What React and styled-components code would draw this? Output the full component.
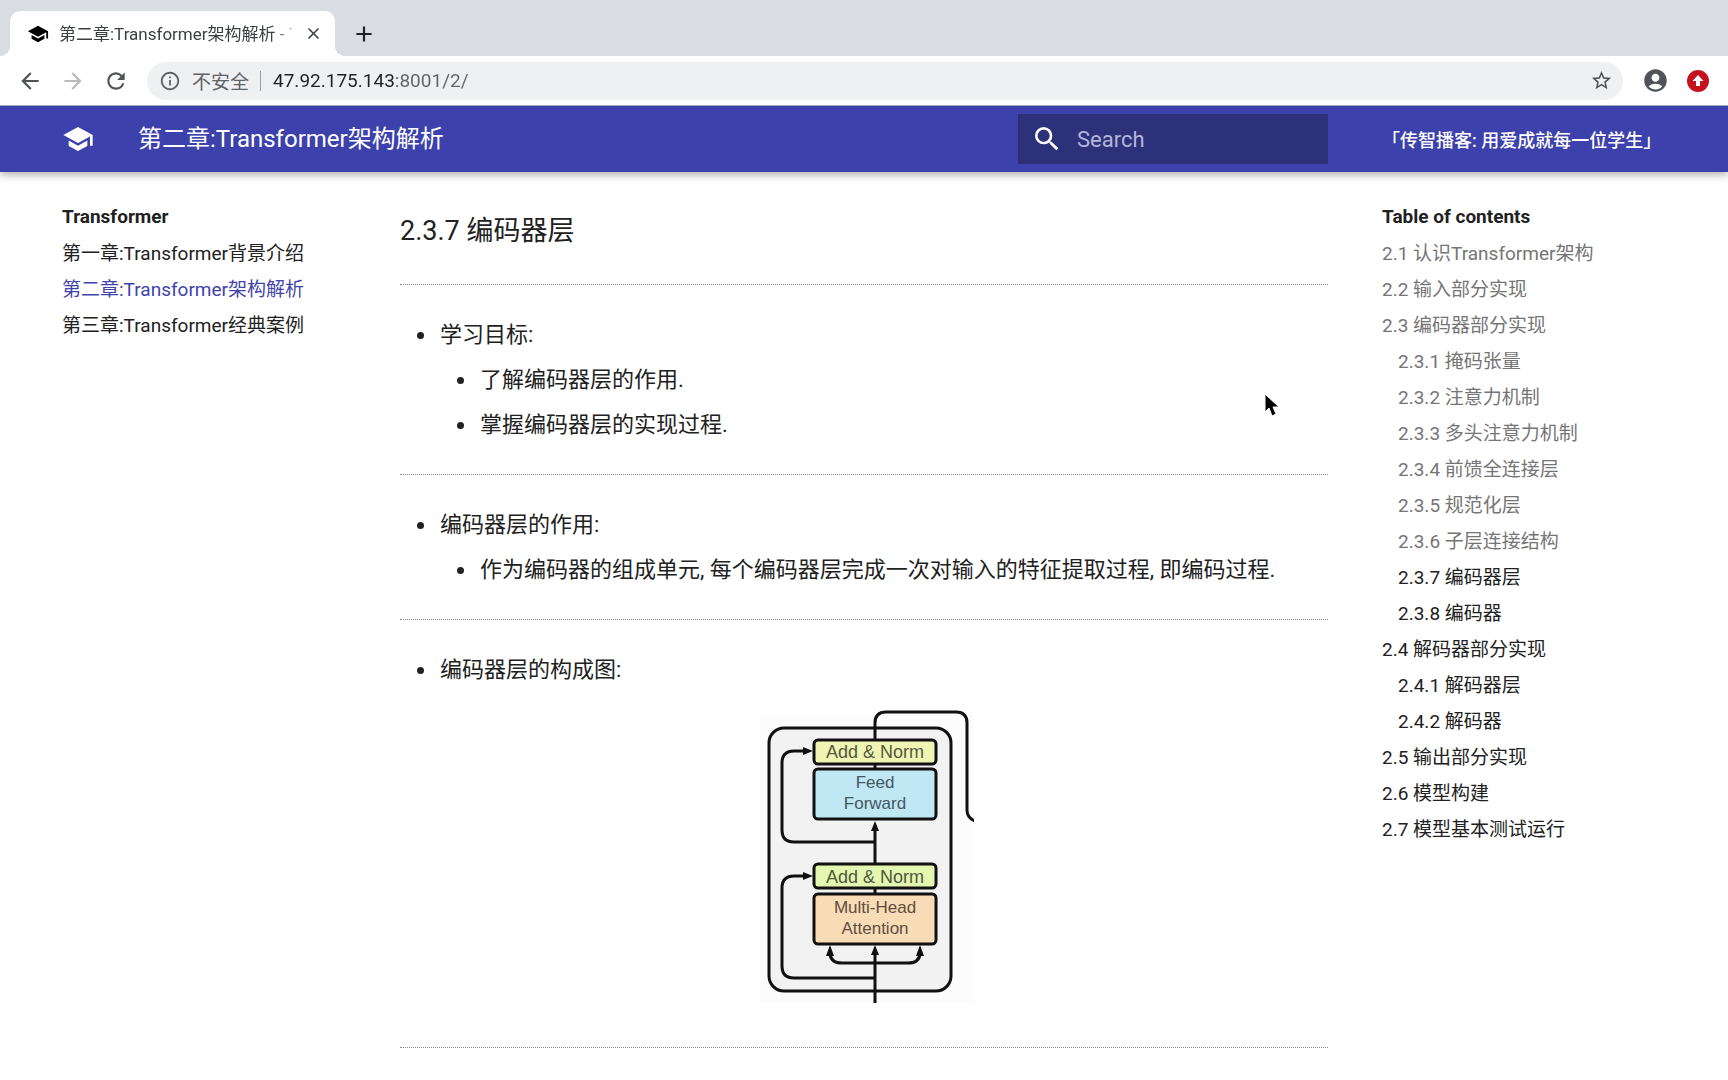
import styled, { createGlobalStyle } from 'styled-components'
import {
  MdSchool,
  MdSearch,
  MdClose,
  MdAdd,
  MdArrowBack,
  MdArrowForward,
  MdRefresh,
  MdInfoOutline,
  MdStarBorder,
  MdAccountCircle,
} from 'react-icons/md'

const chapters = [
  { title: '第一章:Transformer背景介绍', href: '#/1/' },
  { title: '第二章:Transformer架构解析', href: '#/2/', active: true },
  { title: '第三章:Transformer经典案例', href: '#/3/' },
]

const toc = [
  { title: '2.1 认识Transformer架构', passed: true },
  { title: '2.2 输入部分实现', passed: true },
  { title: '2.3 编码器部分实现', passed: true },
  { title: '2.3.1 掩码张量', passed: true, nested: true },
  { title: '2.3.2 注意力机制', passed: true, nested: true },
  { title: '2.3.3 多头注意力机制', passed: true, nested: true },
  { title: '2.3.4 前馈全连接层', passed: true, nested: true },
  { title: '2.3.5 规范化层', passed: true, nested: true },
  { title: '2.3.6 子层连接结构', passed: true, nested: true },
  { title: '2.3.7 编码器层', nested: true },
  { title: '2.3.8 编码器', nested: true },
  { title: '2.4 解码器部分实现' },
  { title: '2.4.1 解码器层', nested: true },
  { title: '2.4.2 解码器', nested: true },
  { title: '2.5 输出部分实现' },
  { title: '2.6 模型构建' },
  { title: '2.7 模型基本测试运行' },
]

const Browser = () => {
  return (
    <div>
      <TabStrip>
        <Tab>
          <MdSchool size={22} color="#000" />
          <TabTitle>第二章:Transformer架构解析 - T</TabTitle>
          <IconButton aria-label="Close tab" $size="22px" $color="#3c4043">
            <MdClose size={19} />
          </IconButton>
        </Tab>
        <IconButton aria-label="New tab" $size="28px" $color="#202124">
          <MdAdd size={26} />
        </IconButton>
      </TabStrip>
      <Toolbar>
        <NavButtons>
          <IconButton aria-label="Back" $size="26px" $color="#505357">
            <MdArrowBack size={26} />
          </IconButton>
          <IconButton aria-label="Forward" $size="26px" $color="#b9bbbe">
            <MdArrowForward size={26} />
          </IconButton>
          <IconButton aria-label="Reload" $size="26px" $color="#505357">
            <MdRefresh size={26} />
          </IconButton>
        </NavButtons>
        <Omnibox>
          <MdInfoOutline size={22} color="#5f6368" />
          <Insecure htmlFor="url">不安全</Insecure>
          <Divider />
          <Url id="url" type="text" defaultValue="47.92.175.143:8001/2/" />
          <IconButton aria-label="Bookmark" $size="22px" $color="#505357">
            <MdStarBorder size={23} />
          </IconButton>
        </Omnibox>
        <IconButton aria-label="Account" $size="28px" $color="#505357">
          <MdAccountCircle size={27} />
        </IconButton>
        <IconButton aria-label="Update" $size="22px" $color="#c5121f">
          <svg width="22" height="22" viewBox="0 0 22 22">
            <circle cx="11" cy="11" r="11" fill="#c5121f" />
            <path d="M11 5l5.500 6H13v5H9v-5H5.500z" fill="#fff" />
          </svg>
        </IconButton>
      </Toolbar>
    </div>
  )
}

const Header = () => {
  return (
    <MyHeader>
      <Logo href="#/" aria-label="Transformer">
        <MdSchool size={32} />
      </Logo>
      <Title>第二章:Transformer架构解析</Title>
      <Search>
        <MdSearch size={32} />
        <SearchInput type="text" aria-label="Search" placeholder="Search" />
      </Search>
      <Source href="#/source">「传智播客: 用爱成就每一位学生」</Source>
    </MyHeader>
  )
}

const EncoderLayer = () => {
  return (
    <Diagram viewBox="14 10 220 293" role="img" aria-label="编码器层的构成图">
      <rect x="20" y="14" width="214" height="289" fill="#fcfcfc" />
      <rect x="29" y="28" width="182" height="263" rx="15" fill="#f2f2f2" />

      <g fill="none" stroke="#111" strokeWidth="3">
        <rect x="29" y="28" width="182" height="263" rx="15" />
        <path d="M135 40V23q0-11 11-11h70q11 0 11 11v87q0 8 8 11" />
        <path d="M135 164V128" />
        <path d="M135 142H54q-12 0-12-12V63q0-12 12-12h12" />
        <path d="M135 278H54q-12 0-12-12v-78q0-12 12-12h12" />
        <path d="M135 303v-48" />
        <path d="M90 254q1 9 12 9h66q11 0 12-9" />
        <path d="M135 62v10M135 186v10" />
      </g>

      <g fill="#111">
        <path d="M135 121l4 10h-8z" />
        <path d="M73 51l-10 4v-8z" />
        <path d="M73 176l-10 4v-8z" />
        <path d="M135 245l4 10h-8z" />
        <path d="M90 245l4 11h-8z" />
        <path d="M180 245l4 11h-8z" />
      </g>

      <g stroke="#111" strokeWidth="3">
        <rect x="74" y="40" width="122" height="24" rx="4" fill="#f0f5b4" />
        <rect x="74" y="69" width="122" height="50" rx="4" fill="#bfe8f4" />
        <rect x="74" y="164" width="122" height="24" rx="4" fill="#e4f7b0" />
        <rect x="74" y="194" width="122" height="50" rx="4" fill="#f8dcb6" />
      </g>

      <BlockText x="135" y="58" $size="18px" fill="#55583e">Add &amp; Norm</BlockText>
      <BlockText x="135" y="88" $size="17px" fill="#43575f">Feed</BlockText>
      <BlockText x="135" y="109" $size="17px" fill="#43575f">Forward</BlockText>
      <BlockText x="135" y="183" $size="18px" fill="#4f583e">Add &amp; Norm</BlockText>
      <BlockText x="135" y="213" $size="17px" fill="#5f4d40">Multi-Head</BlockText>
      <BlockText x="135" y="234" $size="17px" fill="#5f4d40">Attention</BlockText>
    </Diagram>
  )
}

const App = () => {
  return (
    <>
      <GlobalStyle />
      <Browser />
      <Header />
      <Page>
        <nav aria-label="Chapters">
          <NavTitle>Transformer</NavTitle>
          <NavList>
            {chapters.map((c) => (
              <NavItem key={c.title}>
                <NavLink href={c.href} $active={c.active}>{c.title}</NavLink>
              </NavItem>
            ))}
          </NavList>
        </nav>
        <Article>
          <H3>2.3.7 编码器层</H3>
          <Hr />
          <List>
            <li>
              学习目标:
              <List $nested>
                <li>了解编码器层的作用.</li>
                <li>掌握编码器层的实现过程.</li>
              </List>
            </li>
          </List>
          <Hr />
          <List>
            <li>
              编码器层的作用:
              <List $nested>
                <li>作为编码器的组成单元, 每个编码器层完成一次对输入的特征提取过程, 即编码过程.</li>
              </List>
            </li>
          </List>
          <Hr />
          <List>
            <li>编码器层的构成图:</li>
          </List>
          <Figure>
            <EncoderLayer />
          </Figure>
          <Hr />
        </Article>
        <Toc aria-label="Table of contents">
          <NavTitle>Table of contents</NavTitle>
          <NavList>
            {toc.map((t) => (
              <NavItem key={t.title} $nested={t.nested}>
                <NavLink href={'#' + t.title.split(' ')[0]} $passed={t.passed}>{t.title}</NavLink>
              </NavItem>
            ))}
          </NavList>
        </Toc>
      </Page>
      <Pointer width="16" height="26" viewBox="0 0 16 26">
        <path d="M1 1v18l4-4 3 8 4-2-3-7h6z" fill="#000" stroke="#fff" strokeWidth="1" />
      </Pointer>
    </>
  )
}
export default App

const GlobalStyle = createGlobalStyle`
* {
  box-sizing: border-box;
}
body {
  margin: 0;
  background: #fff;
  color: #212121;
  font-family: Roboto, "Noto Sans CJK SC", sans-serif;
}
a {
  color: inherit;
  text-decoration: none;
}
button, input {
  font-family: inherit;
  border: 0;
  padding: 0;
  background: none;
  outline: none;
}
svg {
  flex-shrink: 0;
}
`
const IconButton = styled.button`
display: flex;
align-items: center;
justify-content: center;
flex-shrink: 0;
width: ${(p) => p.$size};
height: ${(p) => p.$size};
color: ${(p) => p.$color};
cursor: pointer;
`
const TabStrip = styled.div`
display: flex;
align-items: center;
gap: 15px;
height: 56px;
padding: 11px 10px 0;
background-color: #d9dce1;
`
const Tab = styled.div`
position: relative;
display: flex;
align-items: center;
gap: 10px;
width: 325px;
height: 45px;
padding: 0 11px 0 17px;
border-radius: 10px 10px 0 0;
background-color: #fff;
&::before, &::after {
  content: "";
  position: absolute;
  bottom: 0;
  width: 10px;
  height: 10px;
}
&::before {
  left: -10px;
  background: radial-gradient(circle at 0 0, transparent 10px, #fff 10px);
}
&::after {
  right: -10px;
  background: radial-gradient(circle at 100% 0, transparent 10px, #fff 10px);
}
`
const TabTitle = styled.span`
flex: 1;
min-width: 0;
white-space: nowrap;
font-size: 17px;
line-height: 24px;
color: #3c4043;
mask-image: linear-gradient(to right, #000 215px, transparent 240px);
`
const Toolbar = styled.div`
display: flex;
align-items: center;
gap: 18px;
height: 50px;
padding: 0 19px 0 17px;
background-color: #fff;
border-bottom: 1px solid #a9abc0;
`
const NavButtons = styled.div`
display: flex;
gap: 17px;
`
const Omnibox = styled.div`
display: flex;
align-items: center;
flex: 1;
height: 38px;
padding: 0 11px 0 12px;
border-radius: 19px;
background-color: #eff0f2;
`
const Insecure = styled.label`
margin-left: 11px;
font-size: 19px;
color: #5f6368;
`
const Divider = styled.span`
width: 1px;
height: 20px;
margin: 0 12px 0 11px;
background-color: #9a9da1;
`
/* host in dark, port and path in grey */
const Url = styled.input`
flex: 1;
height: 30px;
font-size: 19px;
color: transparent;
caret-color: #202124;
background: linear-gradient(to right, #202124 122px, #5f6368 122px);
background-clip: text;
`
const MyHeader = styled.header`
position: relative;
display: flex;
align-items: center;
height: 66px;
padding-left: 62px;
background-color: #3c41ab;
color: #fff;
box-shadow: 0 3px 8px rgba(0, 0, 0, 0.3);
clip-path: inset(0 0 -16px 0);
`
const Logo = styled.a`
display: flex;
width: 76px;
`
const Title = styled.h1`
flex: 1;
margin: 0;
font-size: 24px;
font-weight: 400;
line-height: 36px;
`
const Search = styled.label`
display: flex;
align-items: center;
gap: 14px;
width: 310px;
height: 50px;
padding-left: 13px;
background-color: #2c3179;
`
const SearchInput = styled.input`
flex: 1;
min-width: 0;
font-size: 22px;
color: #fff;
&::placeholder {
  color: #b3b5da;
  opacity: 1;
}
`
const Source = styled.a`
width: 400px;
padding-left: 54px;
font-size: 18px;
font-weight: 500;
white-space: nowrap;
`
const Page = styled.div`
display: grid;
grid-template-columns: 338px 1fr 400px;
padding: 27px 0 0 62px;
`
const Toc = styled.nav`
padding-left: 54px;
`
const NavTitle = styled.div`
font-size: 19px;
font-weight: 700;
line-height: 36px;
`
const NavList = styled.ul`
margin: 1px 0 0;
padding: 0;
list-style: none;
`
const NavItem = styled.li`
height: 36px;
padding-left: ${(p) => (p.$nested ? '16px' : '0')};
line-height: 36px;
`
const NavLink = styled.a`
font-size: 19px;
white-space: nowrap;
color: ${(p) => (p.$active ? '#3f44ab' : p.$passed ? '#757575' : '#212121')};
`
const Article = styled.main`
min-width: 0;
`
const H3 = styled.h3`
margin: 14px 0 35px;
font-size: 27px;
font-weight: 400;
line-height: 36px;
`
const Hr = styled.hr`
margin: 32px 0;
border: 0;
border-top: 1px dotted #8a8a8a;
`
const List = styled.ul`
margin: ${(p) => (p.$nested ? '10px 0 0' : '0')};
padding-left: 40px;
list-style: none;
font-size: 22px;
line-height: 35px;
& > li + li {
  margin-top: 10px;
}
& > li::before {
  content: "";
  display: inline-block;
  width: 7px;
  height: 7px;
  margin: 0 16px 2px -23px;
  border-radius: 50%;
  background-color: #212121;
  vertical-align: middle;
}
`
const Figure = styled.figure`
display: flex;
justify-content: center;
margin: 23px 0 44px;
`
const Diagram = styled.svg`
width: 220px;
height: 293px;
`
const BlockText = styled.text`
font-family: "Liberation Sans", Arial, sans-serif;
font-size: ${(p) => p.$size};
text-anchor: middle;
`
const Pointer = styled.svg`
position: absolute;
top: 393px;
left: 1264px;
pointer-events: none;
`
